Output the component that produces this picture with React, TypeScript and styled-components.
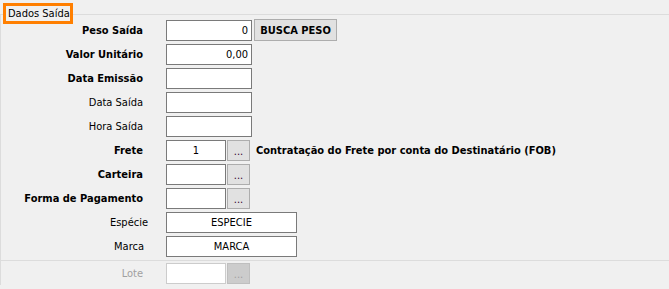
import React, {FunctionComponent} from 'react';
import styled, {createGlobalStyle} from 'styled-components';

const fontStack = `Tahoma, 'DejaVu Sans Condensed', 'Liberation Sans', sans-serif`;

const GlobalStyle = createGlobalStyle`
    html, body {
        margin: 0;
        padding: 0;
        background-color: #f0f0f0;
    }
    body {
        font-family: ${fontStack};
        font-size: 11px;
        color: #000;
    }
`;

const Page = styled.div`
    width: 669px;
    height: 289px;
    padding-top: 14px;
    box-sizing: border-box;
    background-color: #f0f0f0;
    overflow: hidden;
`;

const Group = styled.div`
    position: relative;
    border-top: 1px solid #dcdcdc;
    border-left: 1px solid #dcdcdc;
    height: 271px;
    box-sizing: border-box;
    padding-top: 5px;
`;

const Legend = styled.div`
    position: absolute;
    left: 2px;
    top: -12px;
    width: 70px;
    height: 21px;
    box-sizing: border-box;
    border: 3px solid #ff7f00;
    background-color: #f0f0f0;
    padding-left: 2px;
    line-height: 15px;
    font-size: 11px;
    white-space: nowrap;
`;

const Form = styled.div`
    display: flex;
    flex-direction: column;
    gap: 3px;
`;

const Row = styled.div`
    display: grid;
    grid-template-columns: 165px auto;
    align-items: center;
    height: 21px;
`;

const Label = styled.div<{$bold?: boolean; $center?: boolean; $disabled?: boolean}>`
    font-weight: ${props => (props.$bold ? 700 : 400)};
    color: ${props => (props.$disabled ? '#a0a0a0' : '#000')};
    text-align: ${props => (props.$center ? 'center' : 'right')};
    padding: ${props => (props.$center ? '0 12px 0 103px' : '0 23px 0 0')};
    white-space: nowrap;
`;

const Fields = styled.div`
    display: flex;
    align-items: center;
    gap: 1px;
    height: 21px;
`;

const Input = styled.input<{$width: number; $align?: 'left' | 'right' | 'center'; $disabled?: boolean}>`
    width: ${props => props.$width}px;
    height: 21px;
    box-sizing: border-box;
    margin: 0;
    padding: 0 3px;
    border: 1px solid ${props => (props.$disabled ? '#cccccc' : '#7a7a7a')};
    border-radius: 0;
    background-color: #fff;
    font-family: ${fontStack};
    font-size: 11px;
    color: #000;
    text-align: ${props => props.$align || 'left'};
    outline: none;
`;

const LookupButton = styled.button<{$disabled?: boolean}>`
    width: 23px;
    height: 21px;
    box-sizing: border-box;
    margin: 0;
    padding: 3px 0 0;
    border: 1px solid ${props => (props.$disabled ? '#bfbfbf' : '#adadad')};
    border-radius: 0;
    background-color: ${props => (props.$disabled ? '#cccccc' : '#e1e1e1')};
    color: ${props => (props.$disabled ? '#a0a0a0' : '#300030')};
    font-family: ${fontStack};
    font-size: 11px;
    line-height: 14px;
`;

const ActionButton = styled.button`
    width: 83px;
    height: 22px;
    box-sizing: border-box;
    margin: -1px 0 0 1px;
    padding: 0;
    border: 1px solid #adadad;
    border-radius: 0;
    background-color: #e1e1e1;
    font-family: ${fontStack};
    font-size: 11px;
    font-weight: 700;
    color: #000;
`;

const Description = styled.span`
    margin-left: 5px;
    font-weight: 700;
    white-space: nowrap;
`;

const Separator = styled.div`
    border-top: 1px solid #dcdcdc;
    margin: 3px 0 2px -1px;
`;

interface FieldRow {
    label: string;
    bold?: boolean;
    center?: boolean;
    value?: string;
    width?: number;
    align?: 'left' | 'right' | 'center';
    lookup?: boolean;
    description?: string;
    action?: string;
}

const rows: FieldRow[] = [
    {label: 'Peso Saída', bold: true, value: '0', width: 86, align: 'right', action: 'BUSCA PESO'},
    {label: 'Valor Unitário', bold: true, value: '0,00', width: 86, align: 'right'},
    {label: 'Data Emissão', bold: true, width: 86},
    {label: 'Data Saída', width: 86},
    {label: 'Hora Saída', width: 86},
    {
        label: 'Frete',
        bold: true,
        value: '1',
        width: 60,
        align: 'center',
        lookup: true,
        description: 'Contratação do Frete por conta do Destinatário (FOB)'
    },
    {label: 'Carteira', bold: true, width: 60, lookup: true},
    {label: 'Forma de Pagamento', bold: true, width: 60, lookup: true},
    {label: 'Espécie', center: true, value: 'ESPECIE', width: 131, align: 'center'},
    {label: 'Marca', center: true, value: 'MARCA', width: 131, align: 'center'}
];

const App: FunctionComponent = () => {
    return (
        <Page>
            <GlobalStyle />
            <Group>
                <Legend>Dados Saída</Legend>
                <Form>
                    {rows.map(row => (
                        <Row key={row.label}>
                            <Label $bold={row.bold} $center={row.center}>
                                {row.label}
                            </Label>
                            <Fields>
                                <Input
                                    readOnly
                                    value={row.value || ''}
                                    $width={row.width || 86}
                                    $align={row.align}
                                />
                                {row.lookup && <LookupButton>...</LookupButton>}
                                {row.action && <ActionButton>{row.action}</ActionButton>}
                                {row.description && <Description>{row.description}</Description>}
                            </Fields>
                        </Row>
                    ))}
                </Form>
                <Separator />
                <Row>
                    <Label $disabled>Lote</Label>
                    <Fields>
                        <Input readOnly disabled value="" $width={60} $disabled />
                        <LookupButton $disabled disabled>
                            ...
                        </LookupButton>
                    </Fields>
                </Row>
            </Group>
        </Page>
    );
};

export default App;
